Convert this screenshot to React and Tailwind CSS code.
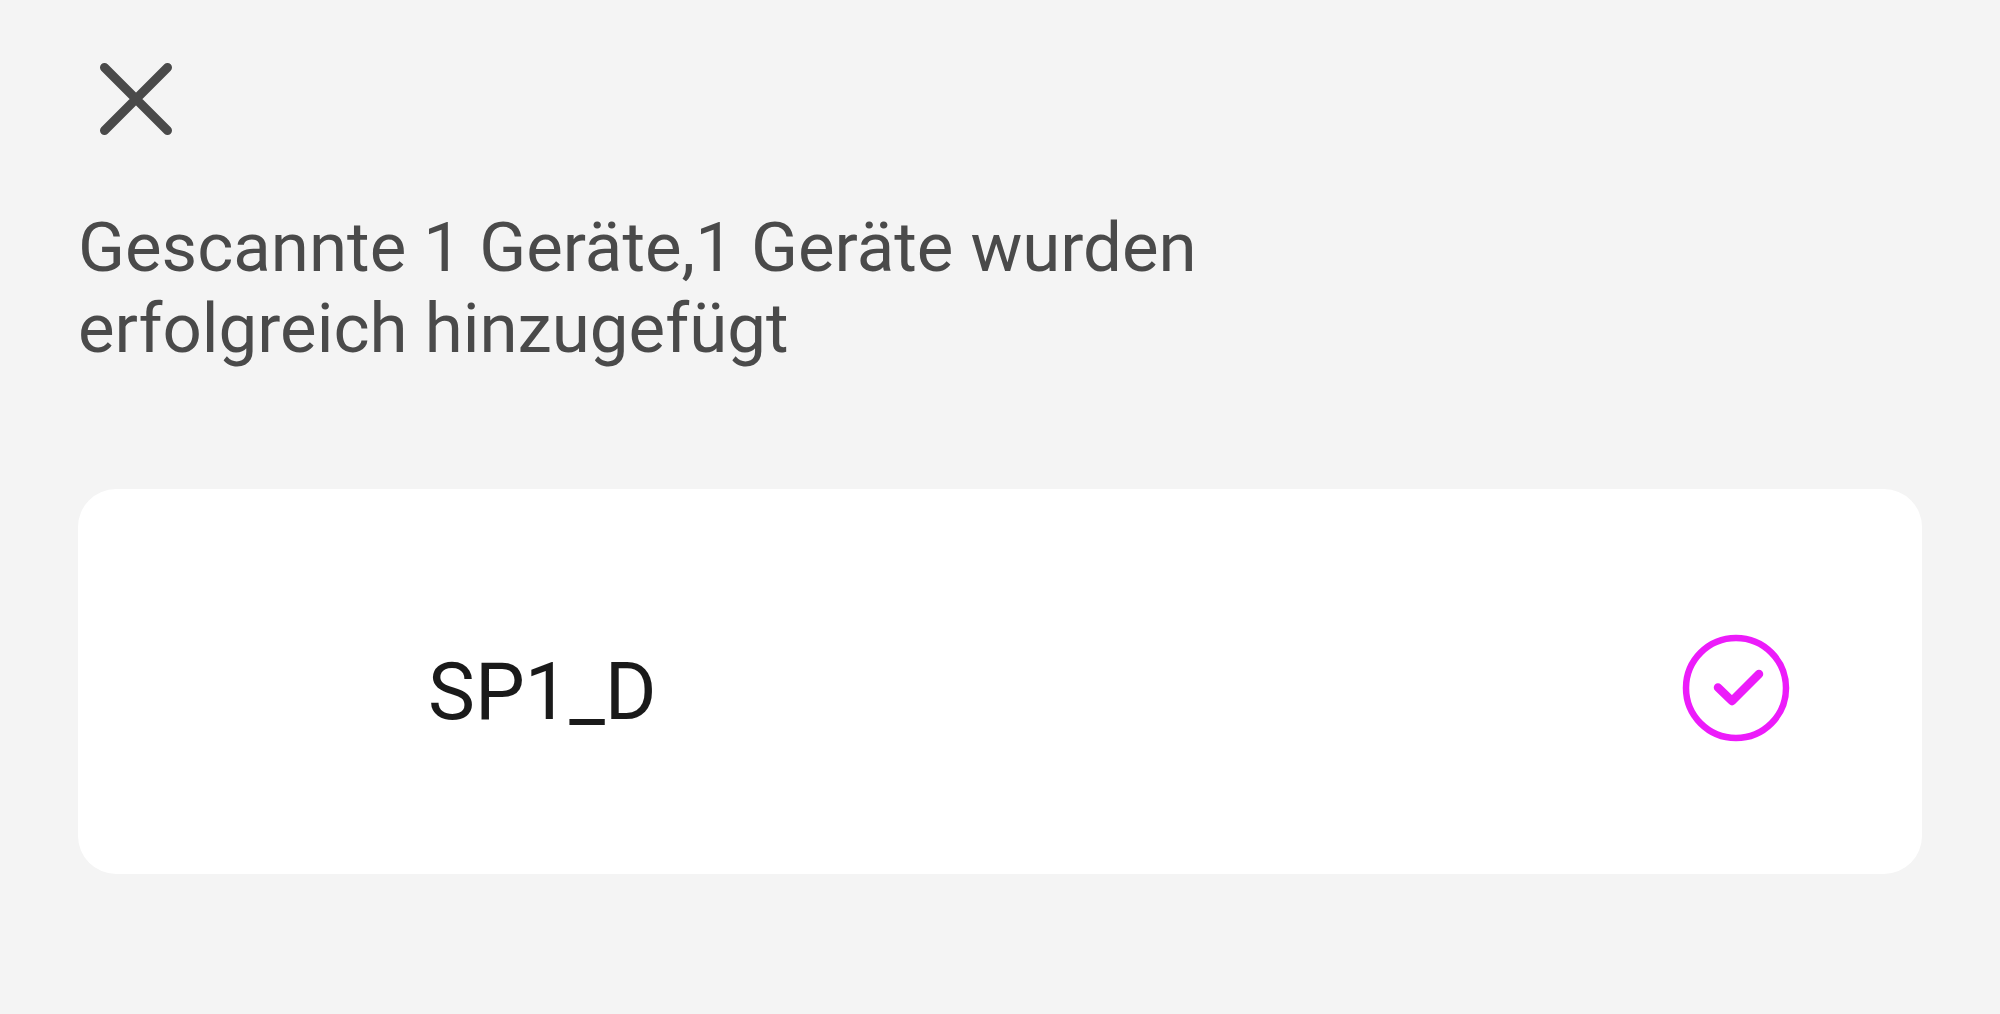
const devices = [{ id: 'sp1-d', name: 'SP1_D' }];

function CloseIcon() {
  return (
    <svg viewBox="0 0 76 76" className="w-[76px] h-[76px]" fill="none" stroke="currentColor" strokeWidth="9" strokeLinecap="round" aria-hidden="true">
      <path d="M6.5 6.5 L69.5 69.5 M69.5 6.5 L6.5 69.5" />
    </svg>
  );
}

function CheckIcon() {
  return (
    <svg viewBox="0 0 108 108" className="w-[108px] h-[108px] shrink-0" fill="none" stroke="#ec1cfa" role="img" aria-label="Hinzugefügt">
      <circle cx="54" cy="54" r="50" strokeWidth="6.5" />
      <path d="M36 53.5 L50 67 L77 40" strokeWidth="8.5" strokeLinecap="round" strokeLinejoin="round" />
    </svg>
  );
}

export default function App() {
  const summary = `Gescannte ${devices.length} Geräte,${devices.length} Geräte wurden erfolgreich hinzugefügt`;

  return (
    <main className="min-h-screen bg-[#f4f4f4] px-[78px] pt-[61px] font-['Roboto',sans-serif]">
      <button type="button" aria-label="Schließen" className="block ml-5 text-[#4a4a4a] cursor-pointer">
        <CloseIcon />
      </button>

      <h1 className="mt-[70px] max-w-[1200px] text-[69px] leading-[81px] font-normal text-[#4a4a4a]">
        {summary}
      </h1>

      <ul className="mt-[120px] space-y-6">
        {devices.map(device => (
          <li key={device.id} className="flex items-end justify-between rounded-[38px] bg-white pt-[145px] pb-[132px] pl-[350px] pr-[132px]">
            <span className="text-[79px] leading-[100px] text-[#1a1a1a]">{device.name}</span>
            <CheckIcon />
          </li>
        ))}
      </ul>
    </main>
  );
}
